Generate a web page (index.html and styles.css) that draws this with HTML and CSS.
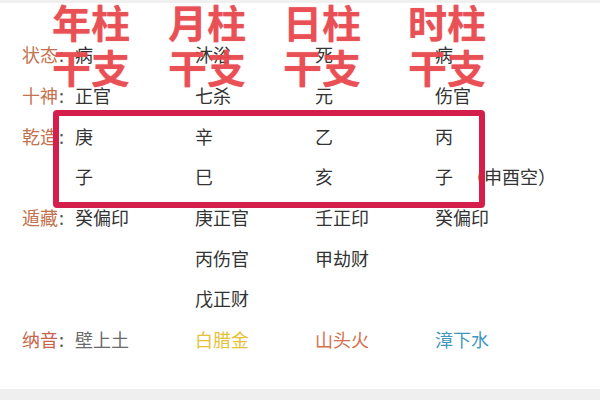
FILE: index.html
```html
<!DOCTYPE html>
<html lang="zh">
<head>
<meta charset="utf-8">
<link rel="stylesheet" href="styles.css">
</head>
<body>
<div class="topbar"></div>
<div class="page">
  <div class="table">
    <div class="row"><span class="lab">状态<i>:</i></span><span>病</span><span>沐浴</span><span>死</span><span>病</span></div>
    <div class="row"><span class="lab">十神<i>:</i></span><span>正官</span><span>七杀</span><span>元</span><span>伤官</span></div>
    <div class="row"><span class="lab">乾造<i>:</i></span><span>庚</span><span>辛</span><span>乙</span><span>丙</span></div>
    <div class="row"><span class="lab"></span><span>子</span><span>巳</span><span>亥</span><span class="wide">子<em>（申酉空）</em></span></div>
    <div class="row"><span class="lab">遁藏<i>:</i></span><span>癸偏印</span><span>庚正官</span><span>壬正印</span><span>癸偏印</span></div>
    <div class="row"><span class="lab"></span><span></span><span>丙伤官</span><span>甲劫财</span><span></span></div>
    <div class="row"><span class="lab"></span><span></span><span>戊正财</span><span></span><span></span></div>
    <div class="row"><span class="lab nayin">纳音<i>:</i></span><span class="grey">壁上土</span><span class="yellow">白腊金</span><span class="orange">山头火</span><span class="blue">漳下水</span></div>
  </div>
  <div class="frame"></div>
  <div class="stamp">
    <span>年柱</span><span>月柱</span><span>日柱</span><span>时柱</span>
    <span>干支</span><span>干支</span><span>干支</span><span>干支</span>
  </div>
</div>
<div class="bottombar"></div>
</body>
</html>
```
FILE: styles.css
```css
html, body {
  margin: 0;
  padding: 0;
  background: #ffffff;
  width: 600px;
  height: 400px;
  overflow: hidden;
  font-family: "Noto Sans CJK SC", "Noto Sans", sans-serif;
}
.topbar {
  height: 3px;
  background: #f0f0f0;
}
.page {
  position: relative;
  height: 385px;
}
.table {
  padding: 31px 0 0 22px;
}
.row {
  display: grid;
  grid-template-columns: 53px 120px 120px 120px 150px;
  height: 40.7px;
  align-items: center;
  font-size: 18px;
  color: #333333;
}
.row span {
  white-space: nowrap;
}
.lab {
  color: #c4714d;
}
.lab i {
  font-style: normal;
  color: #555;
  margin-left: 1px;
}
.wide em {
  font-style: normal;
  margin-left: 13px;
}
.nayin { color: #c8634c; }
.grey { color: #6a6a6a; }
.yellow { color: #e7bf3a; }
.orange { color: #d4704c; }
.blue { color: #3f97bd; }
.frame {
  position: absolute;
  left: 53px;
  top: 107px;
  width: 420px;
  height: 86px;
  border: 6px solid #d41f4c;
  border-radius: 4px;
}
.stamp {
  position: absolute;
  left: 52px;
  top: -4px;
  display: grid;
  grid-template-columns: 116px 115px 125px 80px;
  grid-auto-rows: 45px;
  font-size: 39px;
  font-weight: 700;
  line-height: 45px;
  color: rgba(232, 72, 78, 0.9);
  text-shadow: 0 0 1px rgba(232, 68, 74, 0.6);
  white-space: nowrap;
}
.bottombar {
  position: absolute;
  left: 0;
  top: 389px;
  width: 600px;
  height: 11px;
  background: #efefef;
}
```
